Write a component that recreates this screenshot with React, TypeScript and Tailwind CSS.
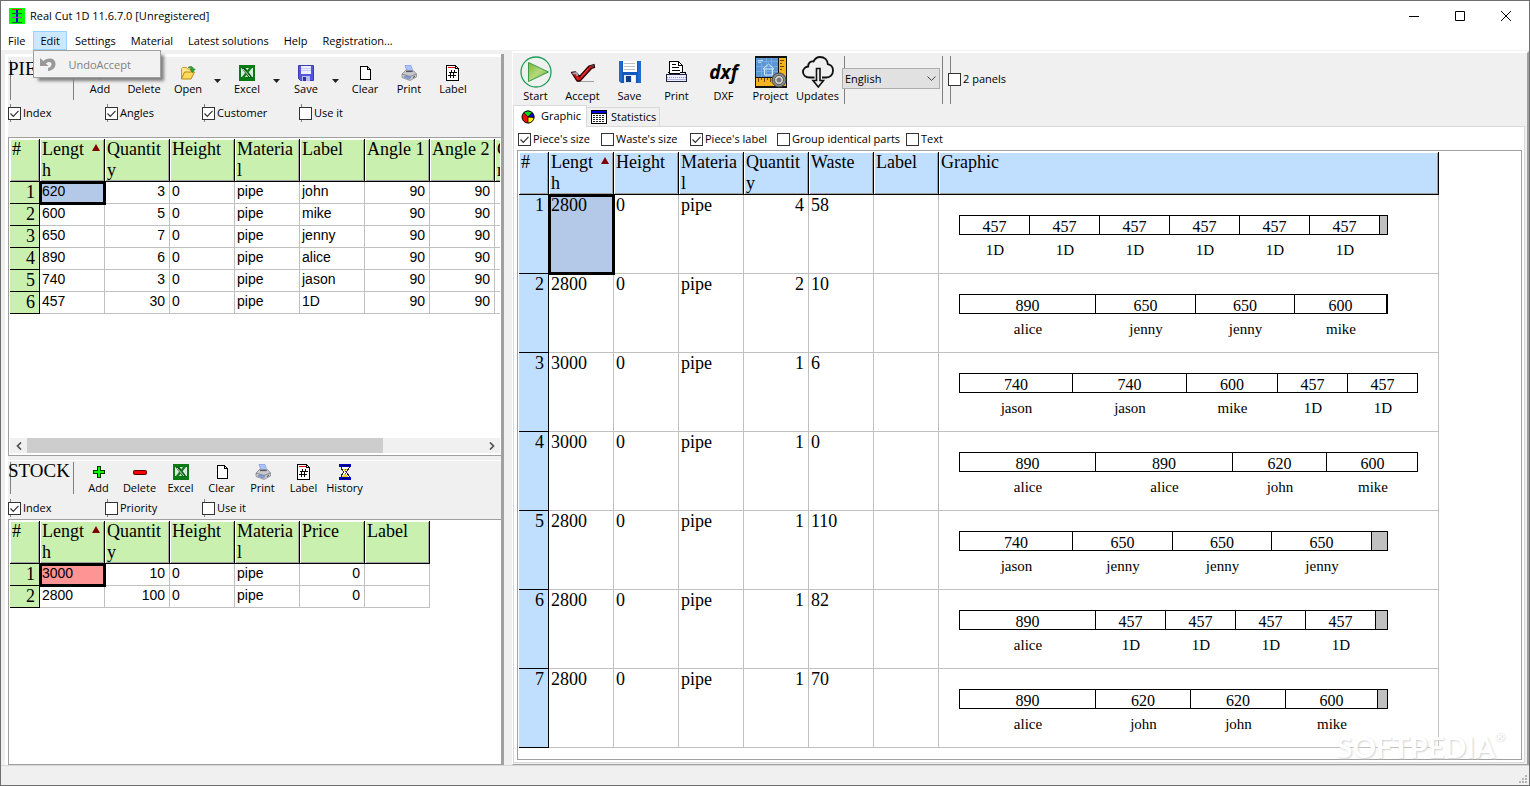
import React, { useState } from "react";
import clsx from "clsx";

type Align = "left" | "right";

interface Column {
  id: string;
  title: string[];
  width: number;
  align?: Align;
  sorted?: boolean;
}

interface Piece {
  length: number;
  label: string;
}

interface Layout {
  stock: number;
  quantity: number;
  waste: number;
  pieces: Piece[];
}

const SCALE = 0.1531;

const pieceColumns: Column[] = [
  { id: "length", title: ["Lengt", "h"], width: 65, sorted: true },
  { id: "quantity", title: ["Quantit", "y"], width: 65, align: "right" },
  { id: "height", title: ["Height"], width: 65 },
  { id: "material", title: ["Materia", "l"], width: 65 },
  { id: "label", title: ["Label"], width: 65 },
  { id: "angle1", title: ["Angle 1"], width: 65, align: "right" },
  { id: "angle2", title: ["Angle 2"], width: 65, align: "right" },
  { id: "customer", title: ["Custome", "r"], width: 65 },
];

const pieceRows = [
  ["620", "3", "0", "pipe", "john", "90", "90", ""],
  ["600", "5", "0", "pipe", "mike", "90", "90", ""],
  ["650", "7", "0", "pipe", "jenny", "90", "90", ""],
  ["890", "6", "0", "pipe", "alice", "90", "90", ""],
  ["740", "3", "0", "pipe", "jason", "90", "90", ""],
  ["457", "30", "0", "pipe", "1D", "90", "90", ""],
];

const stockColumns: Column[] = [
  { id: "length", title: ["Lengt", "h"], width: 65, sorted: true },
  { id: "quantity", title: ["Quantit", "y"], width: 65, align: "right" },
  { id: "height", title: ["Height"], width: 65 },
  { id: "material", title: ["Materia", "l"], width: 65 },
  { id: "price", title: ["Price"], width: 65, align: "right" },
  { id: "label", title: ["Label"], width: 65 },
];

const stockRows = [
  ["3000", "10", "0", "pipe", "0", ""],
  ["2800", "100", "0", "pipe", "0", ""],
];

const resultColumns: Column[] = [
  { id: "length", title: ["Lengt", "h"], width: 65, sorted: true },
  { id: "height", title: ["Height"], width: 65 },
  { id: "material", title: ["Materia", "l"], width: 65 },
  { id: "quantity", title: ["Quantit", "y"], width: 65, align: "right" },
  { id: "waste", title: ["Waste"], width: 65 },
  { id: "label", title: ["Label"], width: 65 },
  { id: "graphic", title: ["Graphic"], width: 500 },
];

const john: Piece = { length: 620, label: "john" };
const mike: Piece = { length: 600, label: "mike" };
const jenny: Piece = { length: 650, label: "jenny" };
const alice: Piece = { length: 890, label: "alice" };
const jason: Piece = { length: 740, label: "jason" };
const oneD: Piece = { length: 457, label: "1D" };

const layouts: Layout[] = [
  { stock: 2800, quantity: 4, waste: 58, pieces: [oneD, oneD, oneD, oneD, oneD, oneD] },
  { stock: 2800, quantity: 2, waste: 10, pieces: [alice, jenny, jenny, mike] },
  { stock: 3000, quantity: 1, waste: 6, pieces: [jason, jason, mike, oneD, oneD] },
  { stock: 3000, quantity: 1, waste: 0, pieces: [alice, alice, john, mike] },
  { stock: 2800, quantity: 1, waste: 110, pieces: [jason, jenny, jenny, jenny] },
  { stock: 2800, quantity: 1, waste: 82, pieces: [alice, oneD, oneD, oneD, oneD] },
  { stock: 2800, quantity: 1, waste: 70, pieces: [alice, john, john, mike] },
];

/* ---------- icons ---------- */

const AppIcon = () => (
  <svg width="16" height="16" viewBox="0 0 16 16" shapeRendering="crispEdges">
    <rect width="16" height="16" fill="#00ff00" />
    <path d="M7 1h2v14H7z" fill="#0000e0" />
    <path d="M3 5.500h10M3 14.500h10" stroke="#206040" />
    <path d="M3 9.500h10" stroke="#c030e0" />
    <path d="M3 1.500h10" stroke="#e02020" />
  </svg>
);

const UndoIcon = () => (
  <svg width="16" height="14" viewBox="0 0 16 14">
    <path
      d="M0 1v8h8.500L5.800 6.400C7.500 4.500 11.500 4 11.500 7.300c0 1.900-1.500 3.200-3.500 3.700V14c4.500-.6 7.500-3 7.500-7C15.500.800 8 0 3.300 4z"
      fill="#999"
    />
  </svg>
);

const AddIcon = () => (
  <svg width="16" height="16" viewBox="0 0 16 16" shapeRendering="crispEdges">
    <path d="M6.500 2.500h3v4h4v3h-4v4h-3v-4h-4v-3h4z" fill="#00ff00" stroke="#003800" />
  </svg>
);

const DeleteIcon = () => (
  <svg width="16" height="16" viewBox="0 0 16 16">
    <rect x="1.500" y="6.500" width="13" height="4" rx="1" fill="#ff0000" stroke="#500000" />
  </svg>
);

const OpenIcon = () => (
  <svg width="16" height="16" viewBox="0 0 16 16">
    <path d="M1.500 13.500V3.500l1-1h4l1 1.500h4.500v3" fill="#ffe88c" stroke="#c89a20" />
    <path d="M1.500 14l3-7h10l-3.500 7z" fill="#ffd95a" stroke="#b88410" />
    <path
      d="M8 2.500c3-2 5-1 5.500 1.500h1.700L12.500 7.500 10 4.500h1.500C11 3 10 2.500 8 2.500z"
      fill="#2fa32f"
      stroke="#0f6c16"
      strokeWidth=".5"
    />
  </svg>
);

const ExcelIcon = () => (
  <svg width="16" height="16" viewBox="0 0 16 16">
    <rect x="1" y="1" width="14" height="14" fill="#dcebdc" stroke="#0a7a14" strokeWidth="2" />
    <path d="M2 2h12v1H2zM2 12h12v2H2z" fill="#0a7a14" />
    <path d="M2.500 3h4l7 9.500h-4z" fill="#0a5a12" />
    <path d="M13 3h-3L2.500 12.500h3z" fill="#0f7c1c" />
    <path d="M4 4l7 8" stroke="#fff" strokeWidth=".8" />
  </svg>
);

const FloppyIcon = () => (
  <svg width="16" height="16" viewBox="0 0 16 16">
    <path d="M.5.500h15v15h-13l-2-2z" fill="#5454e0" stroke="#3c3cb4" />
    <rect x="3" y="1" width="10" height="8" fill="#eef0ff" />
    <path d="M3 3.500h10M3 5.500h10" stroke="#c4c8f0" />
    <rect x="4" y="11" width="8" height="5" fill="#b8bcec" />
    <rect x="5" y="12" width="3" height="4" fill="#30309c" />
  </svg>
);

const PageIcon = () => (
  <svg width="16" height="16" viewBox="0 0 16 16" shapeRendering="crispEdges">
    <path d="M3.500 1.500h7l3 3v10h-10z" fill="#fff" stroke="#000" />
    <path d="M10.500 1.500v3h3" fill="none" stroke="#000" />
  </svg>
);

const PrinterIcon = () => (
  <svg width="16" height="16" viewBox="0 0 16 16">
    <path d="M4 .5h6l2 6H6z" fill="#a9c4ff" stroke="#7f98e0" strokeWidth=".7" />
    <path d="M1 9l4-4 8 1 2.500 3v3L9 15.500 1 12.500z" fill="#c8c8cc" stroke="#808088" strokeWidth=".7" />
    <path d="M1 9l8 2.500 6.500-2.500" fill="none" stroke="#77777f" strokeWidth=".8" />
    <path d="M5 6.500h6.500" stroke="#55555f" strokeWidth="1.200" />
    <path d="M3 12l5 2 2-1.500-5-1.500z" fill="#84a4f0" stroke="#5570b0" strokeWidth=".5" />
    <path d="M12 12.500l2-1" stroke="#404048" />
  </svg>
);

const LabelIcon = () => (
  <svg width="16" height="16" viewBox="0 0 16 16" shapeRendering="crispEdges">
    <path d="M1.500.500h9l3 3v12h-12z" fill="#fff" stroke="#000" />
    <path d="M10.500.500v3h3" fill="none" stroke="#000" />
    <path d="M3 2.500h7" stroke="#e00000" />
    <path d="M4 7.500h8M3 10.500h8" stroke="#000" />
    <path d="M5.500 13V9.500l1-4M8.500 13V9.500l1-4" fill="none" stroke="#000" />
  </svg>
);

const HistoryIcon = () => (
  <svg width="16" height="16" viewBox="0 0 16 16" shapeRendering="crispEdges">
    <path d="M4 2h8v2L9.500 8l2.500 4v2H4v-2l2.500-4L4 4z" fill="#fff" stroke="#222" />
    <path d="M6 5h4L8 7.500zM8 9l3 4H5z" fill="#f0d020" />
    <path d="M8 5v6" stroke="#c02020" strokeDasharray="1 1" />
    <path d="M2 0h12v3H2zM2 13h12v3H2z" fill="#0000c0" />
    <path d="M4 1.500h8M4 14.500h8" stroke="#000060" />
  </svg>
);

const StartIcon = () => (
  <svg width="32" height="32" viewBox="0 0 32 32">
    <defs>
      <linearGradient id="play" x1="0" y1="0" x2="1" y2="1">
        <stop offset="0" stopColor="#7cb838" />
        <stop offset=".5" stopColor="#b4d87c" />
        <stop offset="1" stopColor="#5aa428" />
      </linearGradient>
    </defs>
    <circle cx="16" cy="16" r="15" fill="#eef2ee" stroke="#1f9c58" strokeWidth="1.300" />
    <path d="M8.500 6.500v19L28.500 16z" fill="url(#play)" stroke="#3c9c48" />
  </svg>
);

const AcceptIcon = () => (
  <svg width="32" height="32" viewBox="0 0 32 32">
    <path d="M10 25.500h17" stroke="#a0a0a0" />
    <path
      d="M4.500 16.500l4-.5 4 4.500L22 10l5-1.500.5 3-3 1-11.500 12.500h-3z"
      fill="#d01818"
      stroke="#300000"
      strokeWidth="1.300"
      strokeLinejoin="round"
    />
    <path d="M5.500 17.500l4-.5 1 3" fill="none" stroke="#a8a0a8" strokeWidth="2" />
    <path d="M14 21l7-8" stroke="#f05050" />
    <path d="M24 10l3-.5" stroke="#444" strokeWidth="2" />
  </svg>
);

const SaveIcon = () => (
  <svg width="32" height="32" viewBox="0 0 32 32">
    <path d="M5 5h22v22H7l-2-2z" fill="#1458b8" />
    <path d="M5 5h3v21l-3-1zM24 5h3v22h-3z" fill="#1e6ad0" />
    <path d="M9 5h14v11H9z" fill="#fff" />
    <path d="M10 7.500h11M10 10.500h11M10 13.500h11" stroke="#c0c0c0" />
    <path d="M10 19h12v8H10z" fill="#dce8f4" />
    <path d="M12 20h5v6h-5z" fill="#0c3c8c" />
    <path d="M18 20h3v6h-3z" fill="#fff" />
  </svg>
);

const BigPrintIcon = () => (
  <svg width="32" height="32" viewBox="0 0 32 32" shapeRendering="crispEdges">
    <path d="M8.500 17.500V5.500h9l4 4v8z" fill="#fff" stroke="#000" />
    <path d="M17.500 5.500v4h4" fill="none" stroke="#000" />
    <path d="M11 8.500h4M11 11.500h7M11 14.500h8" stroke="#000" />
    <path d="M6.500 16.500h2M21.500 16.500h3l1 3v6h-20v-6z" fill="#e8e8fc" stroke="#000" />
    <rect x="5.500" y="18.500" width="20" height="7" fill="#ececff" stroke="#202040" />
    <path d="M6 21.500h19" stroke="#9090c0" strokeDasharray="1 1" />
    <path d="M6 23.500h19" stroke="#b4b4e0" />
  </svg>
);

const DxfIcon = () => (
  <span className="flex h-8 items-center font-['Open_Sans',sans-serif] text-[19px] leading-8 font-bold italic">
    dxf
  </span>
);

const ProjectIcon = () => (
  <svg width="32" height="32" viewBox="0 0 32 32">
    <rect width="32" height="32" fill="#111" />
    <rect x="1" y="2" width="22" height="19" fill="#5b96d4" />
    <path
      d="M1 5.500h22M1 10.500h22M1 15.500h22M6.500 2v19M11.500 2v19M16.500 2v19"
      stroke="#8ab8e8"
      strokeWidth=".6"
    />
    <path d="M8 13l5.500-5 5.500 5H8M9.500 13v6h8v-6" fill="none" stroke="#d8ecff" />
    <path d="M3 4.500h5M3 6.500h3" stroke="#b4d4f4" />
    <path d="M24 2h7v28H1v-8h23z" fill="#f4b41c" />
    <path
      d="M25 4.500h4M25 7.500h2M25 10.500h4M25 13.500h2M3.500 22v4M6.500 22v2M9.500 22v4M12.500 22v2M15.500 22v4"
      stroke="#6c4a00"
    />
    <circle cx="24" cy="24" r="7" fill="#8c8c88" stroke="#444" />
    <circle cx="24" cy="24" r="4.500" fill="#d8d8d4" stroke="#555" />
    <circle cx="24" cy="24" r="2.500" fill="#777" />
  </svg>
);

const UpdatesIcon = () => (
  <svg width="32" height="32" viewBox="0 0 32 32" fill="none" stroke="#111" strokeWidth="1.800">
    <path d="M12.500 21.500H7.500C3.500 21.500 1 19 1 16c0-3.200 2.500-5.200 5.200-5.500C6 7 8.500 5 11.500 5.500 13 2.500 15 1 18 1c4.500 0 7.500 3 7.800 7.200C29 8.800 31 11.500 31 14.800c0 4-3 6.700-6.500 6.700H20" />
    <path d="M14.500 12.500h3.500v12h3.500L16.300 31 11 24.500h3.500z" fill="#f0f0f0" strokeWidth="1.600" />
  </svg>
);

const PieIcon = () => (
  <svg width="14" height="14" viewBox="0 0 14 14">
    <circle cx="7" cy="7" r="6" fill="#ff0000" stroke="#000" />
    <path d="M7 7L2.800 2.700A6 6 0 0 1 11.200 2.700z" fill="#00d820" stroke="#000" strokeWidth=".8" />
    <path d="M7 7l4.200-4.300A6 6 0 0 1 13 7.500z" fill="#0000e0" stroke="#000" strokeWidth=".8" />
    <path d="M7 7l6 .5A6 6 0 0 1 7 13z" fill="#ffee00" stroke="#000" strokeWidth=".8" />
  </svg>
);

const TableIcon = () => (
  <svg width="16" height="14" viewBox="0 0 16 14" shapeRendering="crispEdges">
    <rect x=".5" y=".5" width="15" height="13" fill="#fff" stroke="#000" />
    <path d="M1 1h14v2H1z" fill="#0000e0" />
    <path d="M1 3.500h14" stroke="#000" />
    <path d="M2 5.500h12M2 7.500h12M2 9.500h12M2 11.500h12" stroke="#202020" strokeDasharray="2 1" />
  </svg>
);

/* ---------- small controls ---------- */

const ToolButton = ({
  icon,
  label,
  className,
}: {
  icon: React.ReactNode;
  label: string;
  className?: string;
}) => (
  <button
    type="button"
    className={clsx(
      "flex shrink-0 flex-col items-center text-[11px] leading-4 whitespace-nowrap",
      className
    )}
  >
    {icon}
    {label}
  </button>
);

const DropArrow = ({ name }: { name: string }) => (
  <button type="button" aria-label={name} className="flex h-8 w-[15px] shrink-0 items-center justify-center">
    <svg width="7" height="4" viewBox="0 0 7 4">
      <path d="M0 0h7L3.500 4z" fill="#222" />
    </svg>
  </button>
);

const Check = ({
  label,
  checked = false,
  className,
}: {
  label: string;
  checked?: boolean;
  className?: string;
}) => {
  const [isChecked, setIsChecked] = useState<boolean>(checked);
  return (
    <label
      className={clsx("flex shrink-0 items-center gap-0.5 text-[11px] leading-4 whitespace-nowrap", className)}
    >
      <span className="grid">
        <input
          type="checkbox"
          className="peer col-start-1 row-start-1 h-[13px] w-[13px] appearance-none border border-[#333] bg-white"
          checked={isChecked}
          onChange={() => setIsChecked(!isChecked)}
        />
        <svg
          width="13"
          height="13"
          viewBox="0 0 13 13"
          className="pointer-events-none col-start-1 row-start-1 hidden peer-checked:block"
        >
          <path d="M2.500 6.500l2.800 2.800 5.200-5.500" fill="none" stroke="#333" strokeWidth="1.200" />
        </svg>
      </span>
      {label}
    </label>
  );
};

const markedCheck =
  "w-[97px] bg-linear-to-r from-[#808080] to-[#808080] bg-[length:1px_18px] bg-[position:2px_0px] bg-no-repeat h-[18px]";

const HeaderRow = ({ columns, tone }: { columns: Column[]; tone: string }) => (
  <thead>
    <tr className="h-[43px]">
      {[{ id: "index", title: ["#"], width: 30 } as Column, ...columns].map((col) => (
        <th
          key={col.id}
          className={clsx(
            "overflow-hidden border-r border-b border-black p-0 pl-0.5 text-left align-top text-[18px] leading-[21px] font-normal whitespace-nowrap shadow-[inset_1px_1px_#fff,inset_-1px_-1px_#a0a0a0]",
            tone
          )}
        >
          <span className="flex items-start justify-between">
            <span>
              {col.title.map((line) => (
                <span key={line} className="block">
                  {line}
                </span>
              ))}
            </span>
            {col.sorted && (
              <svg width="8" height="7" viewBox="0 0 8 7" className="mt-[5px] mr-1">
                <path d="M4 0l4 7H0z" fill="#800000" />
              </svg>
            )}
          </span>
        </th>
      ))}
    </tr>
  </thead>
);

const ColumnSizes = ({ columns }: { columns: Column[] }) => (
  <colgroup>
    <col className="w-[30px]" />
    {columns.map((col) => (
      <col key={col.id} style={{ width: col.width }} />
    ))}
  </colgroup>
);

const tableWidth = (columns: Column[]) =>
  columns.reduce((sum, col) => sum + col.width, 30);

const DataTable = ({
  columns,
  rows,
  selectedTone,
}: {
  columns: Column[];
  rows: string[][];
  selectedTone: string;
}) => (
  <table
    className="table-fixed border-separate border-spacing-0 font-['Liberation_Serif',serif]"
    style={{ width: tableWidth(columns) }}
  >
    <ColumnSizes columns={columns} />
    <HeaderRow columns={columns} tone="bg-[#caf0b0]" />
    <tbody>
      {rows.map((row, rowIndex) => (
        <tr key={rowIndex} className="h-[22px]">
          <td className="border-r border-b border-black bg-[#caf0b0] p-0 pr-1 text-right text-[18px] leading-[21px]">
            {rowIndex + 1}
          </td>
          {row.map((cell, index) => (
            <td
              key={columns[index].id}
              className={clsx(
                "border-r border-b border-[#c0c0c0] p-0 pl-0.5 align-top font-['Liberation_Sans',Arial,sans-serif] text-[14px] leading-[19px]",
                columns[index].align === "right" && "pr-1 text-right",
                rowIndex === 0 &&
                  index === 0 &&
                  ["outline-3 -outline-offset-2 outline-black", selectedTone]
              )}
            >
              {cell}
            </td>
          ))}
        </tr>
      ))}
    </tbody>
  </table>
);

/* ---------- cutting graphic ---------- */

const CutBar = ({ layout }: { layout: Layout }) => {
  const total = Math.round(layout.stock * SCALE);
  let used = 0;
  const parts = layout.pieces.map((piece) => {
    const start = Math.round(used * SCALE);
    used += piece.length;
    return { ...piece, width: Math.round(used * SCALE) - start };
  });

  return (
    <div className="pt-5 pl-5">
      <div className="flex h-5 overflow-hidden border border-black" style={{ width: total }}>
        {parts.map((part, index) => (
          <span
            key={index}
            className="shrink-0 border-r border-black text-center text-[16px] leading-[21px]"
            style={{ width: part.width }}
          >
            {part.length}
          </span>
        ))}
        <span className="flex-1 bg-[#c0c0c0]" />
      </div>
      <div className="flex pt-[5px] pl-px text-[15px] leading-5">
        {parts.map((part, index) => (
          <span key={index} className="shrink-0 text-center" style={{ width: part.width }}>
            {part.label}
          </span>
        ))}
      </div>
    </div>
  );
};

const ResultTable = () => {
  const cell = "border-r border-b border-[#c0c0c0] p-0 pl-0.5 align-top";
  return (
    <table
      className="table-fixed border-separate border-spacing-0 font-['Liberation_Serif',serif] text-[18px] leading-[21px]"
      style={{ width: tableWidth(resultColumns) }}
    >
      <ColumnSizes columns={resultColumns} />
      <HeaderRow columns={resultColumns} tone="bg-[#c0dfff]" />
      <tbody>
        {layouts.map((layout, index) => (
          <tr key={index} className="h-[79px]">
            <td className="border-r border-b border-black bg-[#c0dfff] p-0 pr-1 text-right align-top">
              {index + 1}
            </td>
            <td
              className={clsx(
                cell,
                index === 0 && "bg-[#b4c8e8] outline-3 -outline-offset-2 outline-black"
              )}
            >
              {layout.stock}
            </td>
            <td className={cell}>0</td>
            <td className={cell}>pipe</td>
            <td className={clsx(cell, "pr-1 text-right")}>{layout.quantity}</td>
            <td className={cell}>{layout.waste}</td>
            <td className={cell}></td>
            <td className="border-r border-b border-[#c0c0c0] p-0 align-top">
              <CutBar layout={layout} />
            </td>
          </tr>
        ))}
      </tbody>
    </table>
  );
};

/* ---------- panels ---------- */

const TitleBar = () => (
  <header className="flex h-[30px] items-center bg-white pl-2 text-[11px]">
    <AppIcon />
    <h1 className="ml-[5px] flex-1">Real Cut 1D 11.6.7.0 [Unregistered]</h1>
    <button type="button" aria-label="Minimize" className="flex h-[28px] w-[46px] items-center justify-center">
      <svg width="10" height="10" viewBox="0 0 10 10">
        <path d="M0 5.500h10" stroke="#000" />
      </svg>
    </button>
    <button type="button" aria-label="Maximize" className="flex h-[28px] w-[46px] items-center justify-center">
      <svg width="10" height="10" viewBox="0 0 10 10">
        <path d="M.5.500h9v9h-9z" stroke="#000" fill="none" />
      </svg>
    </button>
    <button type="button" aria-label="Close" className="flex h-[28px] w-[46px] items-center justify-center">
      <svg width="10" height="10" viewBox="0 0 10 10">
        <path d="M0 0l10 10M10 0L0 10" stroke="#000" />
      </svg>
    </button>
  </header>
);

const MenuBar = () => (
  <nav className="flex h-[19px] gap-px bg-white text-[11px] leading-[19px] whitespace-nowrap">
    <button type="button" className="px-[7px]">File</button>
    <div className="relative">
      <button type="button" className="block h-[19px] border border-[#99d1ff] bg-[#cce8ff] px-1.5 leading-[17px]">
        Edit
      </button>
      <div className="absolute top-[19px] left-0 z-20 w-[128px] border border-[#a0a0a0] bg-[#f2f2f2] shadow-[4px_4px_3px_-1px_#808080]">
        <button type="button" disabled className="flex h-[26px] w-full items-center gap-3 pl-1.5 text-[#808080]">
          <UndoIcon />
          UndoAccept
        </button>
      </div>
    </div>
    <button type="button" className="px-[7px]">Settings</button>
    <button type="button" className="px-[7px]">Material</button>
    <button type="button" className="px-[7px]">Latest solutions</button>
    <button type="button" className="px-[7px]">Help</button>
    <button type="button" className="px-[7px]">Registration...</button>
  </nav>
);

const PanelTitle = ({ text, className }: { text: string; className: string }) => (
  <div className={clsx("ml-0.5 w-16 shrink-0 border-x border-[#808080]", className)}>
    <h2 className="-ml-[3px] font-['Liberation_Serif',serif] text-[19px] leading-[18px]">{text}</h2>
  </div>
);

const PiecesPanel = () => (
  <section className="border-t-[3px] border-white">
    <div className="flex h-[45px] pt-[3px]">
      <PanelTitle text="PIECES" className="h-10" />
      <div className="ml-1 flex pt-[5px]">
        <ToolButton icon={<AddIcon />} label="Add" className="w-11" />
        <ToolButton icon={<DeleteIcon />} label="Delete" className="w-11" />
        <ToolButton icon={<OpenIcon />} label="Open" className="w-11" />
        <DropArrow name="Open options" />
        <ToolButton icon={<ExcelIcon />} label="Excel" className="w-11" />
        <DropArrow name="Excel options" />
        <ToolButton icon={<FloppyIcon />} label="Save" className="w-11" />
        <DropArrow name="Save options" />
        <ToolButton icon={<PageIcon />} label="Clear" className="w-11" />
        <ToolButton icon={<PrinterIcon />} label="Print" className="w-11" />
        <ToolButton icon={<LabelIcon />} label="Label" className="w-11" />
      </div>
    </div>
    <div className="flex h-[35px] pt-0.5">
      <Check label="Index" checked className={markedCheck} />
      <Check label="Angles" checked className={markedCheck} />
      <Check label="Customer" checked className={markedCheck} />
      <Check label="Use it" className={markedCheck} />
    </div>
    <div className="flex h-[319px] flex-col border border-r-0 border-[#a0a0a0] bg-white p-px pb-0.5">
      <div className="flex-1 overflow-hidden">
        <DataTable columns={pieceColumns} rows={pieceRows} selectedTone="bg-[#b4c8e8]" />
      </div>
      <div className="flex h-[15px] bg-[#f0f0f0]">
        <button type="button" aria-label="Scroll left" className="flex w-[17px] items-center justify-center">
          <svg width="6" height="8" viewBox="0 0 6 8">
            <path d="M5 .5L1.500 4 5 7.500" fill="none" stroke="#505050" strokeWidth="1.700" />
          </svg>
        </button>
        <div className="flex-1">
          <div className="h-full w-[78%] bg-[#cdcdcd]" />
        </div>
        <button type="button" aria-label="Scroll right" className="flex w-[17px] items-center justify-center">
          <svg width="6" height="8" viewBox="0 0 6 8">
            <path d="M1 .5L4.500 4 1 7.500" fill="none" stroke="#505050" strokeWidth="1.700" />
          </svg>
        </button>
      </div>
    </div>
  </section>
);

const StockPanel = () => (
  <section className="mt-1 flex flex-1 flex-col border-t border-white">
    <div className="flex h-[38px] pt-px">
      <PanelTitle text="STOCK" className="h-8" />
      <div className="ml-1 flex pt-0.5">
        <ToolButton icon={<AddIcon />} label="Add" className="w-[41px]" />
        <ToolButton icon={<DeleteIcon />} label="Delete" className="w-[41px]" />
        <ToolButton icon={<ExcelIcon />} label="Excel" className="w-[41px]" />
        <ToolButton icon={<PageIcon />} label="Clear" className="w-[41px]" />
        <ToolButton icon={<PrinterIcon />} label="Print" className="w-[41px]" />
        <ToolButton icon={<LabelIcon />} label="Label" className="w-[41px]" />
        <ToolButton icon={<HistoryIcon />} label="History" className="w-[41px]" />
      </div>
    </div>
    <div className="flex h-5">
      <Check label="Index" checked className={markedCheck} />
      <Check label="Priority" className={markedCheck} />
      <Check label="Use it" className={markedCheck} />
    </div>
    <div className="flex-1 border border-r-0 border-[#a0a0a0] bg-white p-px">
      <DataTable columns={stockColumns} rows={stockRows} selectedTone="bg-[#ff9494]" />
    </div>
  </section>
);

const ResultPanel = () => {
  const [language, setLanguage] = useState<string>("English");
  return (
    <section className="flex min-w-0 flex-1 flex-col border-t-2 border-r-2 border-b border-l border-t-white border-r-[#a0a0a0] border-b-[#a0a0a0] border-l-white">
      <div className="-ml-px flex h-[52px] pt-[3px]">
        <ToolButton icon={<StartIcon />} label="Start" className="w-[47px]" />
        <ToolButton icon={<AcceptIcon />} label="Accept" className="w-[47px]" />
        <ToolButton icon={<SaveIcon />} label="Save" className="w-[47px]" />
        <ToolButton icon={<BigPrintIcon />} label="Print" className="w-[47px]" />
        <ToolButton icon={<DxfIcon />} label="DXF" className="w-[47px]" />
        <ToolButton icon={<ProjectIcon />} label="Project" className="w-[47px]" />
        <ToolButton icon={<UpdatesIcon />} label="Updates" className="w-[47px]" />
        <div className="ml-[3px] h-12 w-[99px] shrink-0 border-x border-[#808080] pt-3">
          <div className="relative -ml-[3px] w-[98px]">
            <select
              aria-label="Language"
              value={language}
              onChange={(e) => setLanguage(e.target.value)}
              className="block h-[21px] w-full appearance-none border border-[#adadad] bg-[#e1e1e1] pl-0.5 text-[11px] leading-4"
            >
              <option>English</option>
            </select>
            <svg
              width="9"
              height="6"
              viewBox="0 0 9 6"
              className="pointer-events-none absolute top-2 right-1"
            >
              <path d="M.5.500l4 4 4-4" fill="none" stroke="#444" />
            </svg>
          </div>
        </div>
        <div className="ml-[7px] h-12 border-l border-[#808080] pt-[15px]">
          <Check label="2 panels" className="-ml-[3px]" />
        </div>
      </div>

      <div role="tablist" className="flex h-[21px] items-end text-[11px]">
        <button
          type="button"
          role="tab"
          aria-selected="true"
          className="z-10 -mb-px flex h-[22px] w-[74px] items-center gap-1.5 border border-b-0 border-[#d9d9d9] bg-white pl-[7px]"
        >
          <PieIcon />
          Graphic
        </button>
        <button
          type="button"
          role="tab"
          aria-selected="false"
          className="flex h-[19px] w-[73px] items-center gap-1 border border-b-0 border-l-0 border-[#d9d9d9] pl-1"
        >
          <TableIcon />
          Statistics
        </button>
      </div>

      <div className="mr-0.5 mb-px flex flex-1 flex-col border border-[#d9d9d9] bg-white pr-0.5 pb-0.5 pl-[3px]">
        <div className="flex h-[23px] items-center pt-px pl-px">
          <Check label="Piece's size" checked className="w-[83px]" />
          <Check label="Waste's size" className="w-[89px]" />
          <Check label="Piece's label" checked className="w-[87px]" />
          <Check label="Group identical parts" className="w-[129px]" />
          <Check label="Text" />
        </div>
        <div className="flex-1 overflow-hidden border border-[#a0a0a0] p-px">
          <ResultTable />
        </div>
      </div>
    </section>
  );
};

const StatusBar = () => (
  <footer className="flex h-5 items-end justify-end border-t border-[#d7d7d7] p-px">
    <svg width="9" height="9" viewBox="0 0 9 9" fill="#b4b4b4">
      <path d="M6 0h2v2H6zM3 3h2v2H3zM6 3h2v2H6zM0 6h2v2H0zM3 6h2v2H3zM6 6h2v2H6z" />
    </svg>
  </footer>
);

const App = () => (
  <div className="relative flex min-h-screen flex-col overflow-hidden border border-[#6f6f6f] bg-[#f0f0f0] font-['Open_Sans',Tahoma,sans-serif] text-black">
    <TitleBar />
    <MenuBar />
    <main className="flex flex-1 pt-px">
      <div className="mr-2 flex w-[503px] shrink-0 flex-col pt-[3px] pl-1">
        <div className="flex flex-1 flex-col border-r-[3px] border-l-[3px] border-r-[#a0a0a0] border-l-white">
          <PiecesPanel />
          <StockPanel />
        </div>
      </div>
      <ResultPanel />
    </main>
    <StatusBar />
    <div className="pointer-events-none absolute right-6 bottom-5 flex items-start font-['Lato',sans-serif] text-[29px] leading-9 font-bold text-white [text-shadow:1px_1px_2px_#d0d0d0]">
      SOFTPEDIA
      <span className="text-[12px] leading-4">®</span>
    </div>
  </div>
);

export default App;
